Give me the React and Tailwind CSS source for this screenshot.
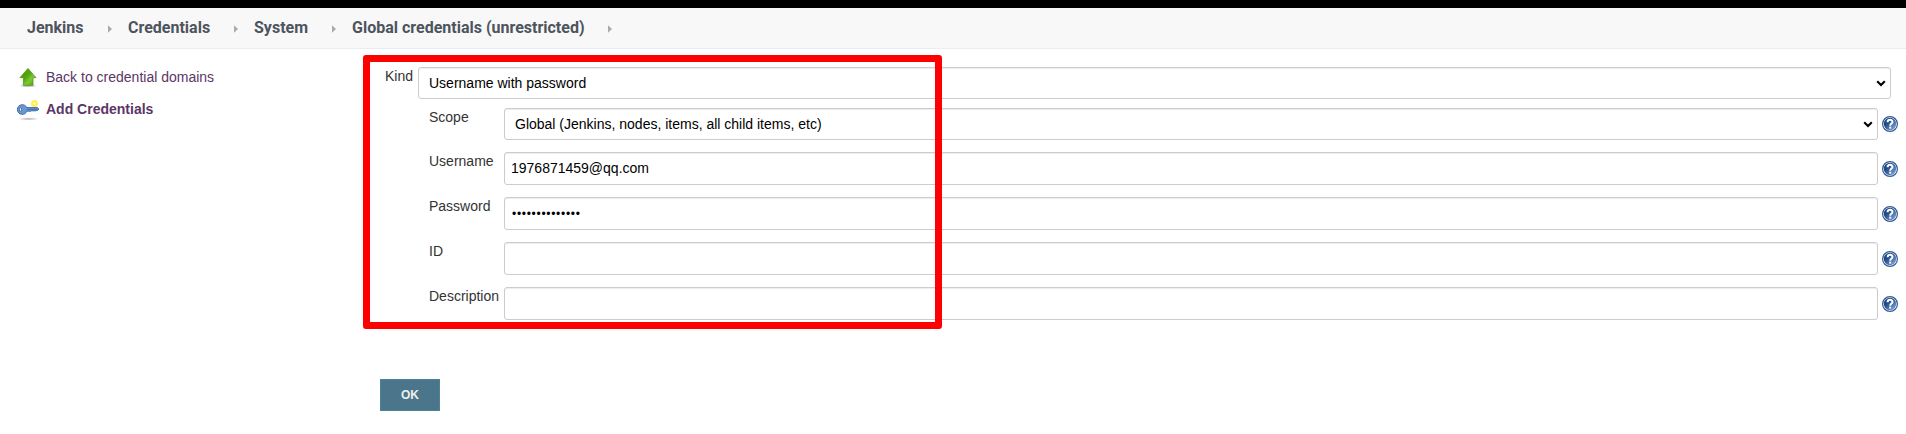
const crumbs = [
  ["Jenkins", "w-[101px]"],
  ["Credentials", "w-[126px]"],
  ["System", "w-[98px]"],
  ["Global credentials (unrestricted)", "w-[276px]"],
];

function Chevron({ className }) {
  return (
    <svg className={className} width="10" height="7" viewBox="0 0 10 7" fill="none">
      <path d="M1.2 1.3 L5 5 L8.8 1.3" stroke="#000" strokeWidth="2.1" />
    </svg>
  );
}

function HelpIcon() {
  return (
    <svg className="shrink-0" width="16" height="16" viewBox="0 0 16 16">
      <defs>
        <linearGradient id="help" x1="0" y1="0" x2="1" y2="1">
          <stop offset="0.35" stopColor="#204a87" />
          <stop offset="1" stopColor="#8fb3de" />
        </linearGradient>
      </defs>
      <circle cx="8" cy="8" r="7.4" fill="#fff" stroke="#2f5a98" strokeWidth="1.2" />
      <circle cx="8" cy="8" r="6.2" fill="url(#help)" />
      <path d="M5.6 6.2 C5.6 3.1 10.5 3.1 10.5 5.9 C10.5 7.6 8.2 7.6 8.2 9.7" fill="none" stroke="#fff" strokeWidth="2" />
      <rect x="7.2" y="10.6" width="2" height="2" fill="#fff" />
    </svg>
  );
}

function UpIcon() {
  return (
    <svg width="24" height="24" viewBox="0 0 24 24">
      <defs>
        <linearGradient id="up" x1="0" y1="0" x2="1" y2="1">
          <stop offset="0" stopColor="#4e9a06" />
          <stop offset="0.45" stopColor="#56a30f" />
          <stop offset="0.65" stopColor="#7ccb35" />
          <stop offset="1" stopColor="#4e9a06" />
        </linearGradient>
        <radialGradient id="upShadow">
          <stop offset="0.3" stopColor="#000" stopOpacity=".3" />
          <stop offset="1" stopColor="#000" stopOpacity="0" />
        </radialGradient>
      </defs>
      <ellipse cx="12" cy="20.6" rx="9" ry="2" fill="url(#upShadow)" />
      <path d="M12 3.4 L20 12.7 H17 V20.3 H7.4 V12.7 H3.9 Z" fill="url(#up)" stroke="#4a8f0c" strokeWidth=".7" />
    </svg>
  );
}

function KeyIcon() {
  return (
    <svg width="24" height="24" viewBox="0 0 24 24">
      <defs>
        <radialGradient id="keyShadow">
          <stop offset="0.2" stopColor="#000" stopOpacity=".25" />
          <stop offset="1" stopColor="#000" stopOpacity="0" />
        </radialGradient>
      </defs>
      <ellipse cx="12.5" cy="21.9" rx="10.5" ry="1.7" fill="url(#keyShadow)" />
      <circle cx="18.4" cy="6.6" r="2.4" fill="#fffde0" stroke="#fdf04a" strokeWidth="2.2" />
      <path d="M10.6 10.6 H21.4 L22.9 12 L21.6 13.4 H20 L19 14.2 L18 13.4 L17 14.2 L16 13.4 L15 14.2 H10.7 C9.6 18.8 1.4 18.4 1.4 12.5 C1.4 6.8 9.4 6.2 10.6 10.6 Z" fill="#6a97cf" stroke="#3465a4" strokeWidth=".9" />
      <ellipse cx="4.5" cy="12.5" rx="1.1" ry="1.9" fill="#e8f0fa" stroke="#3465a4" strokeWidth=".9" />
      <path d="M11 12.3 H21.5" stroke="#3a6cad" strokeWidth=".9" />
    </svg>
  );
}

function Row({ label, className, children }) {
  return (
    <div className={`flex items-center pl-[49px] ${className}`}>
      <label className="w-[75px] shrink-0 self-start whitespace-nowrap pt-px leading-4 text-[#333]">{label}</label>
      <div className="flex h-full w-[1374px] items-center rounded-[3px] border border-[#ccc] bg-white text-black shadow-[inset_0_1px_1px_rgba(0,0,0,0.075)]">
        {children}
      </div>
      <span className="ml-1 flex">
        <HelpIcon />
      </span>
    </div>
  );
}

export default function App() {
  return (
    <div className="relative h-[434px] w-[1906px] overflow-hidden bg-white font-['Liberation_Sans',Arial,sans-serif] text-[14px]">
      <div className="h-2 bg-black" />
      <nav className="flex h-[41px] items-center border-b border-[#e6eef3] bg-[#f8f8f8] pl-[27px] font-['Roboto',sans-serif] text-[16px] font-bold leading-5 text-[#4d545d]">
        {crumbs.map(([text, width]) => (
          <div key={text} className={`flex shrink-0 items-center justify-between whitespace-nowrap ${width}`}>
            <a>{text}</a>
            <svg className="mr-[16px] mt-px" width="4" height="8" viewBox="0 0 4 8">
              <path d="M0 0.3 L4 4 L0 7.7 Z" fill="#aaa" />
            </svg>
          </div>
        ))}
      </nav>
      <div className="flex">
        <aside className="flex w-[380px] flex-col gap-2 pl-4 pt-4 text-[#5c3566]">
          <a className="flex h-6 items-center gap-[6px]">
            <UpIcon />
            <span>Back to credential domains</span>
          </a>
          <a className="flex h-6 items-center gap-[6px] font-bold">
            <KeyIcon />
            <span>Add Credentials</span>
          </a>
        </aside>
        <main className="w-[1526px] pt-[18px]">
          <div className="flex h-8 pl-[5px]">
            <label className="w-[33px] pt-px leading-4 text-[#333]">Kind</label>
            <div className="flex h-8 w-[1473px] items-center justify-between rounded-[3px] border border-[#ccc] pl-[10px] pr-1 text-black shadow-[inset_0_1px_1px_rgba(0,0,0,0.075)]">
              Username with password
              <Chevron />
            </div>
          </div>
          <Row label="Scope" className="mt-[9px] h-8">
            <span className="grow pl-[10px]">Global (Jenkins, nodes, items, all child items, etc)</span>
            <Chevron className="mr-1" />
          </Row>
          <Row label="Username" className="mt-3 h-[33px]">
            <span className="pl-[6px]">1976871459@qq.com</span>
          </Row>
          <Row label="Password" className="mt-3 h-[33px]">
            <span className="pl-[7px] text-[12px] tracking-[0.7px]">••••••••••••••</span>
          </Row>
          <Row label="ID" className="mt-3 h-[33px]" />
          <Row label="Description" className="mt-3 h-[33px]" />
          <button className="mt-[59px] h-8 w-[60px] border border-[#4a8398] bg-[#4b758b] text-[12px] font-bold text-[#eee]">OK</button>
        </main>
      </div>
      <div className="absolute left-[363px] top-[55px] h-[274px] w-[579px] rounded-[3px] border-[7px] border-[#f00]" />
    </div>
  );
}
